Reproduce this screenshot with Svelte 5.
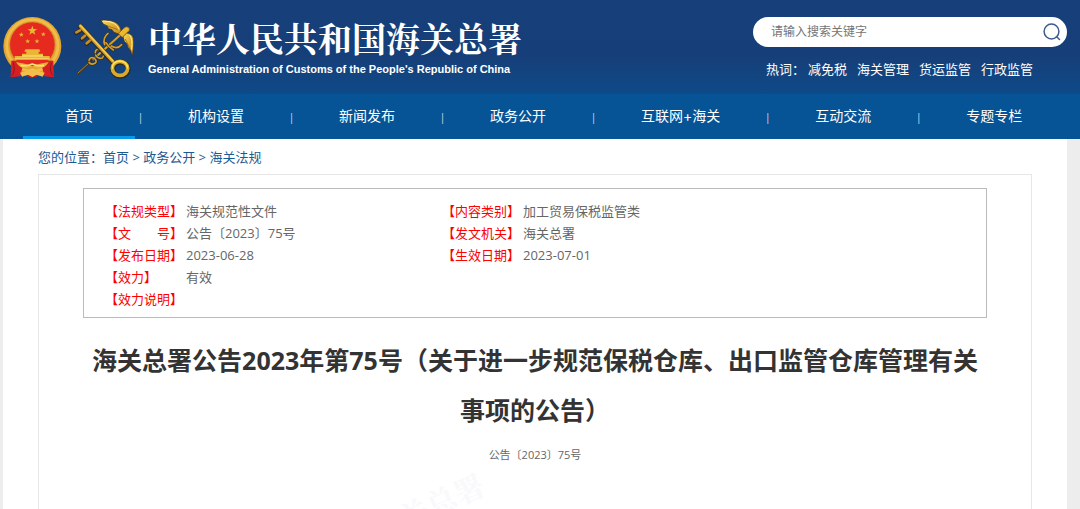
<script>
  const menu = ['首页', '机构设置', '新闻发布', '政务公开', '互联网+海关', '互动交流', '专题专栏'];
  const hotWords = ['减免税', '海关管理', '货运监管', '行政监管'];
  const rows = [
    ['【法规类型】', '海关规范性文件', '【内容类别】', '加工贸易保税监管类'],
    ['【文　　号】', '公告〔2023〕75号', '【发文机关】', '海关总署'],
    ['【发布日期】', '2023-06-28', '【生效日期】', '2023-07-01'],
    ['【效力】', '有效', '', ''],
    ['【效力说明】', '', '', '']
  ];
</script>

<div class="page">
  <header>
    <a class="brand" href="#home">
      <svg class="emblem" viewBox="0 45 411 195" aria-hidden="true">
        <defs>
          <linearGradient id="gold" x1="0" y1="0" x2="1" y2="1">
            <stop offset="0" stop-color="#f5dc6a" />
            <stop offset=".5" stop-color="#e0aa2c" />
            <stop offset="1" stop-color="#c98c26" />
          </linearGradient>
          <path id="star" d="M0-15 3.6-4.8 14.3-4.6 5.8 1.9 8.8 12.1 0 6-8.8 12.1-5.8 1.9-14.3-4.6-3.6-4.8Z" />
        </defs>
        <path d="M38 178 32 232 70 225 97 234 124 225 162 232 156 178Z" fill="#c91c20" />
        <circle cx="97" cy="138" r="87" fill="#e2a531" />
        <circle cx="97" cy="136" r="77" fill="none" stroke="#f0bd4b" stroke-width="8" />
        <circle cx="97" cy="134" r="68" fill="#e62a20" stroke="#cf8c27" stroke-width="2" />
        <g fill="#eab735">
          <use href="#star" x="97" y="92" />
          <use href="#star" transform="translate(64 104) scale(.5)" />
          <use href="#star" transform="translate(130 103) scale(.5)" />
          <use href="#star" transform="translate(83 124) scale(.5)" />
          <use href="#star" transform="translate(111 124) scale(.5)" />
          <path d="M76 148h42l3 7h-5v6h13v7h20v10H44v-10h22v-7h13v-6h-6Z" />
        </g>
        <path d="M66 168h63M45 177h104" stroke="#ffe483" stroke-width="3" />
        <path d="M34 182q28-3 34 19l-8 28-28 3Z" fill="#d71e22" />
        <path d="M160 182q-28-3-34 19l8 28 28 3Z" fill="#d71e22" />
        <path d="M40 187q7 27-4 40M154 187q-7 27 4 40" fill="none" stroke="#8f1820" stroke-width="3" />
        <path d="M48 186q28 4 49 13 21-9 49-13-10 18-30 20l-19-4-19 4q-20-2-30-20Z" fill="#ecaf35" />
        <path d="M60 218l22-6 15-8 15 8 22 6-6 12-18-6-13 7-13-7-18 6Z" fill="#f2c04a" />
        <path d="M62 196q17 4 35-4 18 8 35 4" fill="none" stroke="#ffe07a" stroke-width="5" />

        <g fill="none" stroke-linecap="round" stroke-linejoin="round">
          <path d="M234 221 365 98" stroke="#3d3827" stroke-width="6" />
          <path d="M234 219 265 191" stroke="#b17b32" stroke-width="3" />
          <path d="M280 178 364 102" stroke="#d4a02c" stroke-width="6" />
          <path d="M267 181q4-12 16-6 10 9 2 15-12 6-18-3M286 158q1-15 17-7 14 13 4 23-14 4-20-9M314 134q-7-20 10-34M334 138q18 11 31-4M318 128q8 14 22 22" stroke="#292b2b" stroke-width="8" />
          <path d="M267 181q4-12 16-6 10 9 2 15-12 6-18-3M286 158q1-15 17-7 14 13 4 23-14 4-20-9M314 134q-7-20 10-34M334 138q18 11 31-4M318 128q8 14 22 22" stroke="#d59e29" stroke-width="5" />
          <path d="M303 61q30-2 45 7 14 8 16 30l-8 4-14-5-6-8-10-3-5-9-10-4Z" fill="url(#gold)" stroke="#3a3222" stroke-width="2" />
          <path d="M380 99q17 2 20 16 3 18-3 53l-6-18-7-8-3-10-8-8-4-14Z" fill="url(#gold)" stroke="#3a3222" stroke-width="2" />
          <path d="m315 75 36 13M376 118l14 28" stroke="#7a581f" stroke-width="2" />
          <path d="M310 63q38 0 47 24M389 106q10 8 6 42" stroke="#fff2a0" stroke-width="3" />
          <path d="m356 100 14-14q8-10 17-3 4 9-5 14l-15 15Z" fill="#ecb82e" stroke="#80551b" stroke-width="2" />
          <path d="m241 80 103 112" stroke="#292b2c" stroke-width="15" />
          <path d="M240 92l-11 7M255 109l-9 8M269 124l-9 8" stroke="#292b2c" stroke-width="13" />
          <path d="m241 78 103 112" stroke="#d29a2a" stroke-width="10" />
          <path d="M240 91l-11 6M255 107l-9 8M269 122l-9 8" stroke="#c98c26" stroke-width="8" />
          <path d="m241 76 101 110" stroke="#f5d355" stroke-width="4" />
          <ellipse cx="361" cy="207" rx="23" ry="21" stroke="#292b27" stroke-width="16" />
          <ellipse cx="360" cy="205" rx="23" ry="21" stroke="#d9aa2c" stroke-width="11" />
          <path d="M337 205q0-20 21-22 22 0 25 21" stroke="#fbe560" stroke-width="4" />
        </g>
      </svg>
      <span class="names">
        <strong>中华人民共和国海关总署</strong>
        <span class="english">General Administration of Customs of the People's Republic of China</span>
      </span>
    </a>
    <div class="tools">
      <form class="search" role="search" onsubmit={(e) => e.preventDefault()}>
        <input type="search" placeholder="请输入搜索关键字" aria-label="请输入搜索关键字" />
        <button type="submit" aria-label="搜索">
          <svg viewBox="0 0 18 18" aria-hidden="true">
            <circle cx="8.5" cy="8.5" r="7.4" />
            <path d="m13.5 13.5 3 3" />
          </svg>
        </button>
      </form>
      <div class="hot">
        <span>热词：</span>
        {#each hotWords as word}<a href="#search">{word}</a>{/each}
      </div>
    </div>
  </header>

  <nav class="menu">
    {#each menu as item, i}
      {#if i > 0}<span class="divider">|</span>{/if}
      <a href="#section" class:active={i === 0}>{item}</a>
    {/each}
  </nav>

  <main>
    <nav class="crumbs">
      <span>您的位置：</span><a href="#home">首页</a> &gt; <a href="#open">政务公开</a> &gt; <a href="#law">海关法规</a>
    </nav>
    <article>
      <div class="meta">
        <table>
          <tbody>
            {#each rows as row}
              <tr>
                <th scope="row">{row[0]}</th>
                <td class="first">{row[1]}</td>
                {#if row[2]}
                  <th scope="row">{row[2]}</th>
                  <td>{row[3]}</td>
                {:else}
                  <td></td>
                  <td></td>
                {/if}
              </tr>
            {/each}
          </tbody>
        </table>
      </div>
      <h1>海关总署公告2023年第75号（关于进一步规范保税仓库、出口监管仓库管理有关事项的公告）</h1>
      <p class="number">公告〔2023〕75号</p>
      <span class="watermark" aria-hidden="true">海关总署</span>
    </article>
  </main>
</div>

<style>
  :global(body) {
    margin: 0;
    background: #ededed;
  }
  .page {
    display: flex;
    flex-direction: column;
    min-height: 100vh;
    font: 13px/22px "Open Sans", "Noto Sans CJK SC", sans-serif;
    color: #666;
  }
  a {
    color: inherit;
    text-decoration: none;
  }
  header {
    display: flex;
    justify-content: space-between;
    align-items: flex-start;
    height: 94px;
    background: linear-gradient(#173f79 0%, #163f79 60%, #0e4a88 100%);
    color: #fff;
  }
  .brand {
    display: flex;
    gap: 11px;
    padding-top: 15px;
  }
  .emblem {
    width: 137px;
    height: 65px;
  }
  .names {
    display: flex;
    flex-direction: column;
    white-space: nowrap;
  }
  .names strong {
    font: 700 34px/46px "Noto Serif CJK SC", "Noto Sans CJK SC", serif;
  }
  .english {
    font: 700 11px/16px "Liberation Sans", Arial, sans-serif;
  }
  .tools {
    width: 314px;
    padding: 17px 13px 0 0;
  }
  .search {
    display: flex;
    align-items: center;
    height: 30px;
    padding: 0 6px 0 18px;
    box-sizing: border-box;
    border-radius: 15px;
    background: #fff;
  }
  input {
    flex: 1;
    min-width: 0;
    padding: 0;
    border: 0;
    outline: 0;
    background: none;
    font: inherit;
    font-size: 12px;
    color: #555;
  }
  input::placeholder {
    color: #757575;
  }
  button {
    display: flex;
    padding: 0;
    border: 0;
    background: none;
    cursor: pointer;
  }
  button svg {
    width: 18px;
    height: 18px;
    fill: none;
    stroke: #3f5c8c;
    stroke-width: 1.5;
    stroke-linecap: round;
  }
  .hot {
    display: flex;
    gap: 10px;
    padding: 11px 0 0 13px;
    white-space: nowrap;
  }
  .hot span {
    margin-right: -7px;
  }
  .menu {
    display: flex;
    height: 45px;
    padding-left: 23px;
    background: #065496;
    color: #fff;
    font-family: Inter, "Noto Sans CJK SC", sans-serif;
    font-size: 14px;
    line-height: 43px;
    white-space: nowrap;
  }
  .menu a {
    padding: 0 42px;
    box-sizing: border-box;
    border-bottom: 3px solid transparent;
  }
  .menu .active {
    border-color: #0798e8;
  }
  .divider {
    width: 11px;
    text-align: center;
    font-family: "Open Sans", sans-serif;
    font-size: 11px;
    line-height: 45px;
    color: #c5d5e5;
  }
  main {
    flex: 1;
    display: flex;
    flex-direction: column;
    margin: 0 13px 0 3px;
    padding: 0 35px;
    background: #fff;
  }
  .crumbs {
    padding: 7px 0 6px;
    color: #1c5a92;
  }
  article {
    flex: 1;
    position: relative;
    overflow: hidden;
    padding: 13px 44px 0;
    border: 1px solid #e6e6e6;
    border-bottom: 0;
  }
  .meta {
    padding: 11px 21px 7px;
    border: 1px solid #bbb;
  }
  table {
    border-collapse: collapse;
  }
  th,
  td {
    height: 22px;
    padding: 0;
    text-align: left;
    white-space: nowrap;
  }
  th {
    width: 81px;
    font-weight: 400;
    color: #f00;
  }
  .first {
    width: 256px;
  }
  h1 {
    margin: 17px 0 0;
    text-align: center;
    font-size: 25px;
    line-height: 50px;
    font-weight: 700;
    color: #333;
  }
  .number {
    margin: 9px 0 0;
    text-align: center;
    font-size: 11px;
  }
  .watermark {
    position: absolute;
    left: 328px;
    top: 314px;
    font: 700 30px/34px "Noto Serif CJK SC", "Noto Sans CJK SC", serif;
    color: #f8f9fb;
    transform: rotate(-24deg);
  }
</style>
